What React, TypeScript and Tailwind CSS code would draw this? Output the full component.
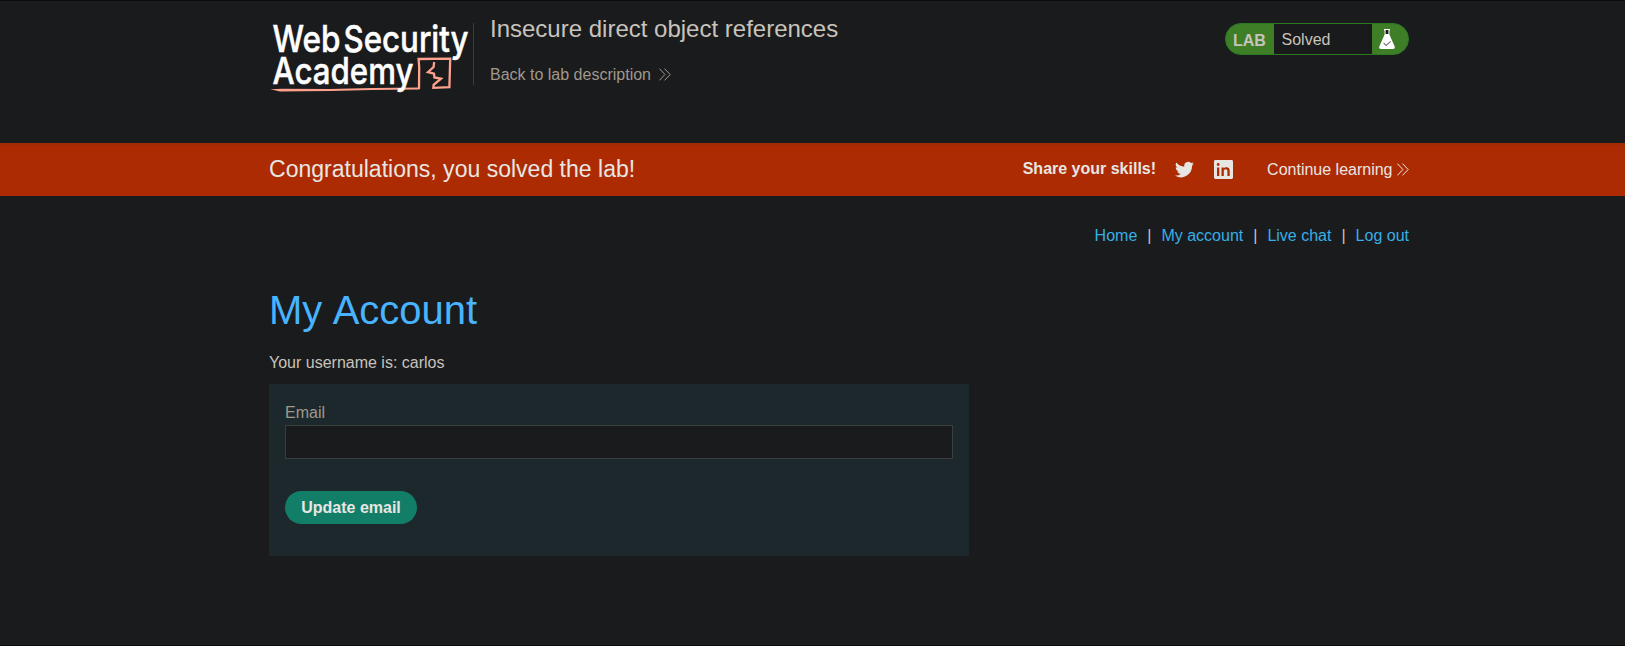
import React from 'react';

function Chevrons({ className }: { className: string }) {
  return (
    <svg className={className} width="12" height="13" viewBox="0 0 12 13" fill="none" stroke="currentColor" strokeWidth="1">
      <path d="M0.4 0.6 L5.9 6.5 L0.4 12.4 M5.5 0.6 L11.2 6.5 L5.5 12.4" />
    </svg>
  );
}

function Logo() {
  return (
    <svg className="block shrink-0 overflow-visible" width="204" height="92" viewBox="269 7 204 92" aria-label="Web Security Academy">
      <path d="M270.3 89.2 L282 88.8 L330 89.1 L372 88 L419.5 87.4 L419.5 89.4 L372 90 L330 91 L280 91.4 Z" fill="#ffa18c" />
      <path d="M419 89 L419.2 67 L418.6 59 L450.2 58.6 L449.4 87.2 L433.4 87.8 L433.6 84.8 L441 78.6 L434.4 77.4 L434 73.6 L428 72.2 L433.6 67 L434.2 62" fill="none" stroke="#ffa18c" strokeWidth="2.3" />
      <g fill="#ffffff" stroke="#ffffff" strokeWidth="0.5" fontFamily="Inter, sans-serif" fontWeight="500" fontSize="37">
        <text x="272.500" y="51.5" textLength="68" lengthAdjust="spacingAndGlyphs">Web</text>
        <text x="343.500" y="51.5" textLength="125" lengthAdjust="spacingAndGlyphs">Security</text>
        <text x="272.500" y="84" textLength="141" lengthAdjust="spacingAndGlyphs">Academy</text>
      </g>
    </svg>
  );
}

function Flask() {
  return (
    <svg width="16" height="20" viewBox="0 0 16 20">
      <path d="M5 0 H11 V1.4 H10.4 V5.5 L15.7 17.6 Q16.2 19.8 14.4 20 H1.6 Q-0.2 19.8 0.3 17.6 L5.6 5.5 V1.4 H5 Z" fill="#ffffff" />
      <path d="M6.6 1 H9.4 V5 H6.6 Z" fill="#181a1b" />
      <path d="M4.6 14 L7.2 16.4 L11.6 12.3" fill="none" stroke="#777" strokeWidth="1.1" />
    </svg>
  );
}

function Header() {
  return (
    <header className="flex h-[142px] w-[1409px] pl-[269px]">
      <div className="pt-[6px]"><Logo /></div>
      <div className="mt-[22px] h-[62px] w-px bg-[#3a3d3f]" />
      <div className="flex flex-col pl-4 pt-[14px]">
        <h2 className="text-2xl leading-[28px] text-[#c8c3bc]">Insecure direct object references</h2>
        <a className="mt-[22px] flex items-start text-base leading-5 text-[#a0988c]">
          Back to lab description
          <Chevrons className="ml-[8.5px] mt-[3px]" />
        </a>
      </div>
      <div className="ml-auto mt-[22px] flex h-8 w-[184px] overflow-hidden rounded-full border border-[#2a7a22] bg-[#3d7e27]">
        <div className="w-[48px] pl-[7px] pt-px text-base font-bold leading-[32px] text-[#c8c3bc]">LAB</div>
        <div className="w-[98px] bg-[#181a1b] pl-[7.5px] text-base leading-[32px] text-[#c8c3bc]">Solved</div>
        <div className="pl-[7px] pt-[5px]"><Flask /></div>
      </div>
    </header>
  );
}

function Banner() {
  return (
    <section className="h-[53px] border-t-[3px] border-[#a32a02] bg-[#ad2b02] text-[#e8e6e3]">
      <div className="flex h-[47px] w-[1409px] items-center pl-[269px]">
        <h4 className="pb-[2px] text-[23.04px] leading-7">Congratulations, you solved the lab!</h4>
        <span className="ml-auto pb-[2px] text-base font-bold">Share your skills!</span>
        <svg className="mb-px ml-[18.5px]" width="19" height="17" viewBox="0 0 24 20" fill="currentColor">
          <path d="M24 2.6a10 10 0 0 1-2.8.8A5 5 0 0 0 23.300.7a10 10 0 0 1-3.100 1.200A4.920 4.920 0 0 0 11.800 6.400 14 14 0 0 1 1.700 1.200a4.900 4.900 0 0 0 1.500 6.600 4.900 4.900 0 0 1-2.200-.6 4.930 4.930 0 0 0 3.900 4.900 5 5 0 0 1-2.200.1 4.930 4.930 0 0 0 4.600 3.400A9.900 9.900 0 0 1 0 17.600 14 14 0 0 0 21.500 5.200 10 10 0 0 0 24 2.600z" />
        </svg>
        <svg className="ml-[20px]" width="19" height="19" viewBox="0 0 19 19">
          <rect width="19" height="19" rx="1.4" fill="currentColor" />
          <path d="M3 7.4h2.300v8.600H3z M7.500 7.400H9.700v1.200c.5-.9 1.500-1.400 2.700-1.400 2.600 0 3.300 1.600 3.300 4V16h-2.300v-4.500c0-1.200-.2-2.200-1.700-2.200s-1.900 1-1.900 2.200V16H7.500z" fill="#ad2b02" />
          <circle cx="4.150" cy="4.500" r="1.400" fill="#ad2b02" />
        </svg>
        <a className="ml-[34.5px] flex items-start pt-px text-base">
          Continue learning
          <Chevrons className="ml-[4.500px] mt-[4.500px]" />
        </a>
      </div>
    </section>
  );
}

function Nav() {
  return (
    <nav className="flex h-5 justify-end gap-[10px] text-base leading-5 text-[#37aee5]">
      <a>Home</a>
      <span className="text-[#c8c3bc]">|</span>
      <a>My account</a>
      <span className="text-[#c8c3bc]">|</span>
      <a>Live chat</a>
      <span className="text-[#c8c3bc]">|</span>
      <a>Log out</a>
    </nav>
  );
}

export default function App() {
  return (
    <div className="h-[646px] overflow-hidden border-y border-[#0b0c0d] bg-[#1a1b1d] font-['Liberation_Sans',Arial,sans-serif]">
      <Header />
      <Banner />
      <main className="w-[1409px] pl-[269px] pt-[30px]">
        <Nav />
        <h1 className="mt-[41px] text-[40px] leading-[46px] text-[#48b3ff] [word-spacing:1.4px]">My Account</h1>
        <p className="mt-[20px] text-base leading-5 text-[#c8c3bc]">Your username is: carlos</p>
        <form className="mt-[11px] h-[172px] w-[700px] bg-[#1d282c] px-4 pt-[18px]">
          <label className="block text-base leading-[21px] text-[#a0988c]">Email</label>
          <input className="mt-[2px] block h-[34px] w-[668px] border border-[#3a3e3f] bg-[#1a1b1d] px-2 outline-none" />
          <button type="button" className="mt-8 block h-[33px] w-[132px] rounded-full bg-[#137e67] text-base font-bold leading-5 text-[#e8e6e3]">Update email</button>
        </form>
      </main>
    </div>
  );
}
